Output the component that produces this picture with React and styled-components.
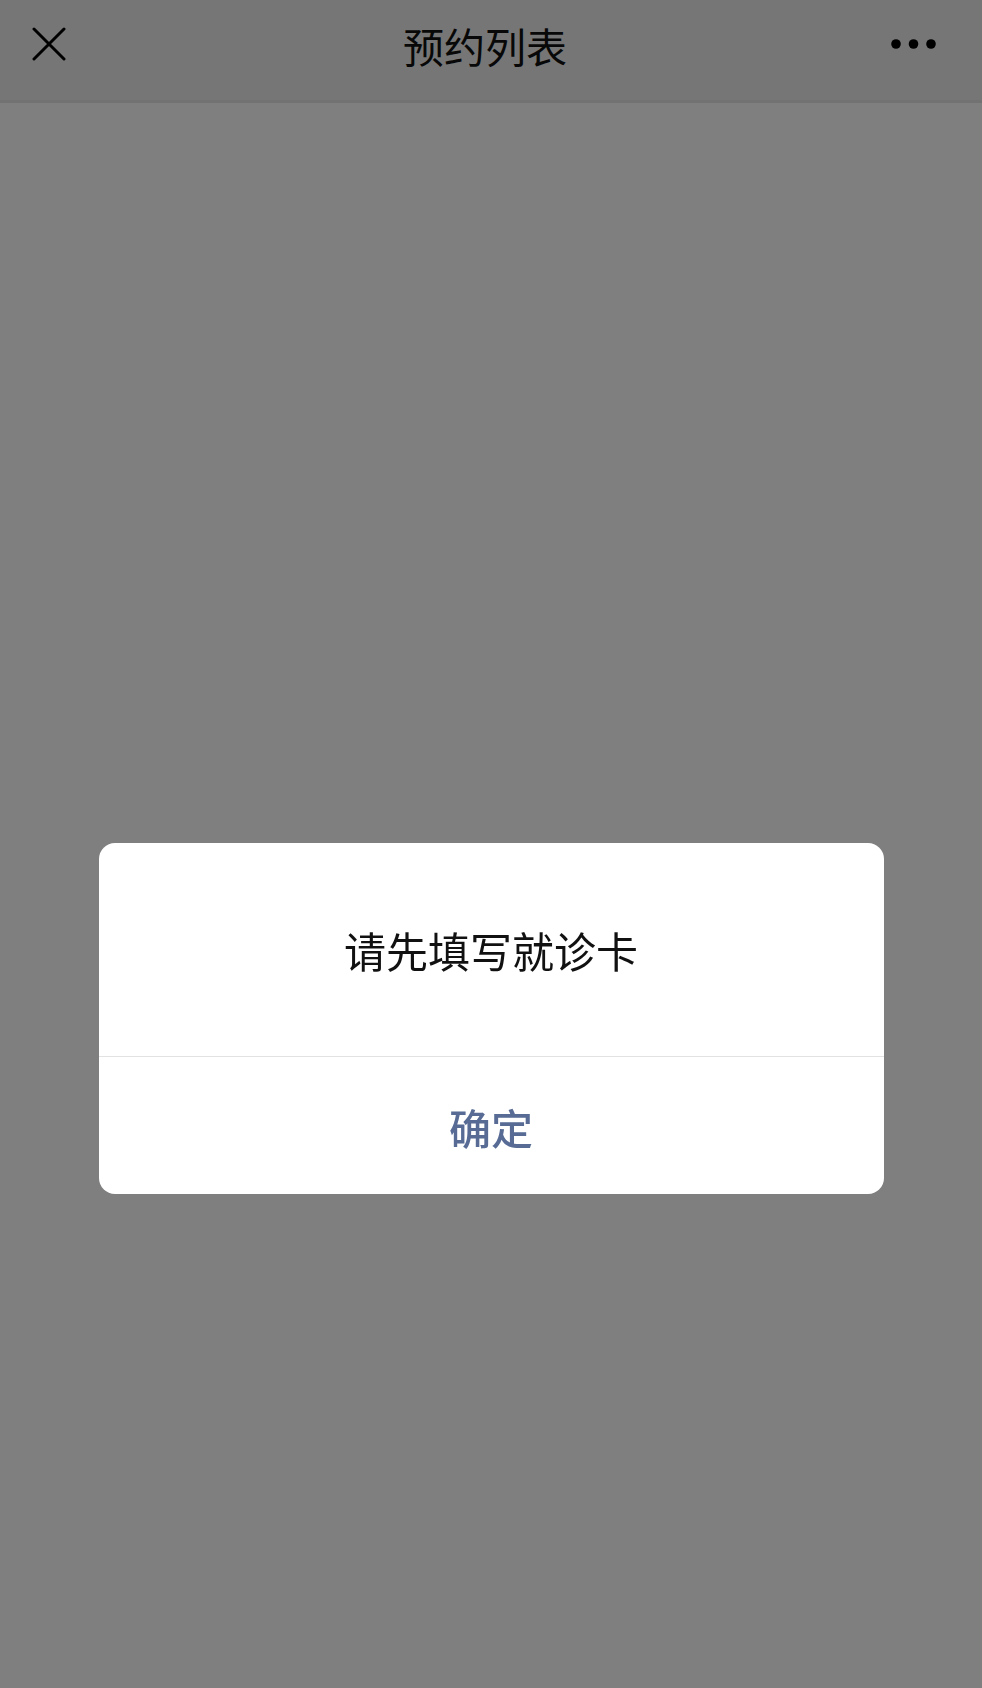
import React from "react";
import styled, { createGlobalStyle } from "styled-components";

const Global = createGlobalStyle`
  html, body { margin: 0; padding: 0; }
  body {
    background: #ffffff;
    font-family: "Noto Sans CJK SC", "Noto Sans", sans-serif;
  }
`;

const Page = styled.div`
  width: 982px;
  height: 1688px;
  background: #ffffff;
  display: flex;
  flex-direction: column;
`;

const NavBar = styled.header`
  height: 103px;
  box-sizing: border-box;
  background: #ededed;
  border-bottom: 3px solid #e4e4e4;
  display: grid;
  grid-template-columns: 120px 1fr 120px;
  align-items: start;
  padding-top: 20px;
`;

const NavButton = styled.button`
  height: 48px;
  border: 0;
  background: transparent;
  padding: 0;
  margin: 0;
  display: flex;
  align-items: center;
  justify-content: ${(p) => (p.$right ? "flex-end" : "flex-start")};
  padding-left: ${(p) => (p.$right ? "0" : "32px")};
  padding-right: ${(p) => (p.$right ? "45px" : "0")};
`;

const Title = styled.h1`
  margin: 0;
  height: 50px;
  line-height: 50px;
  text-align: center;
  font-size: 41px;
  font-weight: 400;
  color: #111111;
  padding-right: 12px;
`;

const Overlay = styled.div`
  position: fixed;
  inset: 0;
  background: rgba(0, 0, 0, 0.5);
  display: flex;
  flex-direction: column;
  align-items: center;
  padding-top: 843px;
  box-sizing: border-box;
`;

const Dialog = styled.div`
  width: 785px;
  background: #ffffff;
  border-radius: 16px;
  overflow: hidden;
  display: flex;
  flex-direction: column;
`;

const Message = styled.div`
  height: 214px;
  display: flex;
  align-items: center;
  justify-content: center;
  font-size: 42px;
  color: #111111;
  border-bottom: 1px solid #e2e2e2;
  box-sizing: border-box;
`;

const Confirm = styled.button`
  height: 137px;
  border: 0;
  background: transparent;
  font-family: inherit;
  font-size: 42px;
  font-weight: 500;
  color: #576b95;
  display: flex;
  align-items: center;
  justify-content: center;
  padding: 1px 0 0;
`;

const DotsIcon = () => (
  <svg width="46" height="12" viewBox="0 0 46 12">
    <circle cx="5" cy="6" r="4.8" fill="#000" />
    <circle cx="22.5" cy="6" r="4.8" fill="#000" />
    <circle cx="40" cy="6" r="4.8" fill="#000" />
  </svg>
);

const CloseIcon = () => (
  <svg width="34" height="34" viewBox="0 0 34 34">
    <path
      d="M2 2 L32 32 M32 2 L2 32"
      stroke="#000"
      strokeWidth="3"
      strokeLinecap="round"
      fill="none"
    />
  </svg>
);

export default function App() {
  return (
    <>
      <Global />
      <Page>
        <NavBar>
          <NavButton aria-label="关闭">
            <CloseIcon />
          </NavButton>
          <Title>预约列表</Title>
          <NavButton $right aria-label="更多">
            <DotsIcon />
          </NavButton>
        </NavBar>
      </Page>
      <Overlay>
        <Dialog role="alertdialog">
          <Message>请先填写就诊卡</Message>
          <Confirm>确定</Confirm>
        </Dialog>
      </Overlay>
    </>
  );
}
